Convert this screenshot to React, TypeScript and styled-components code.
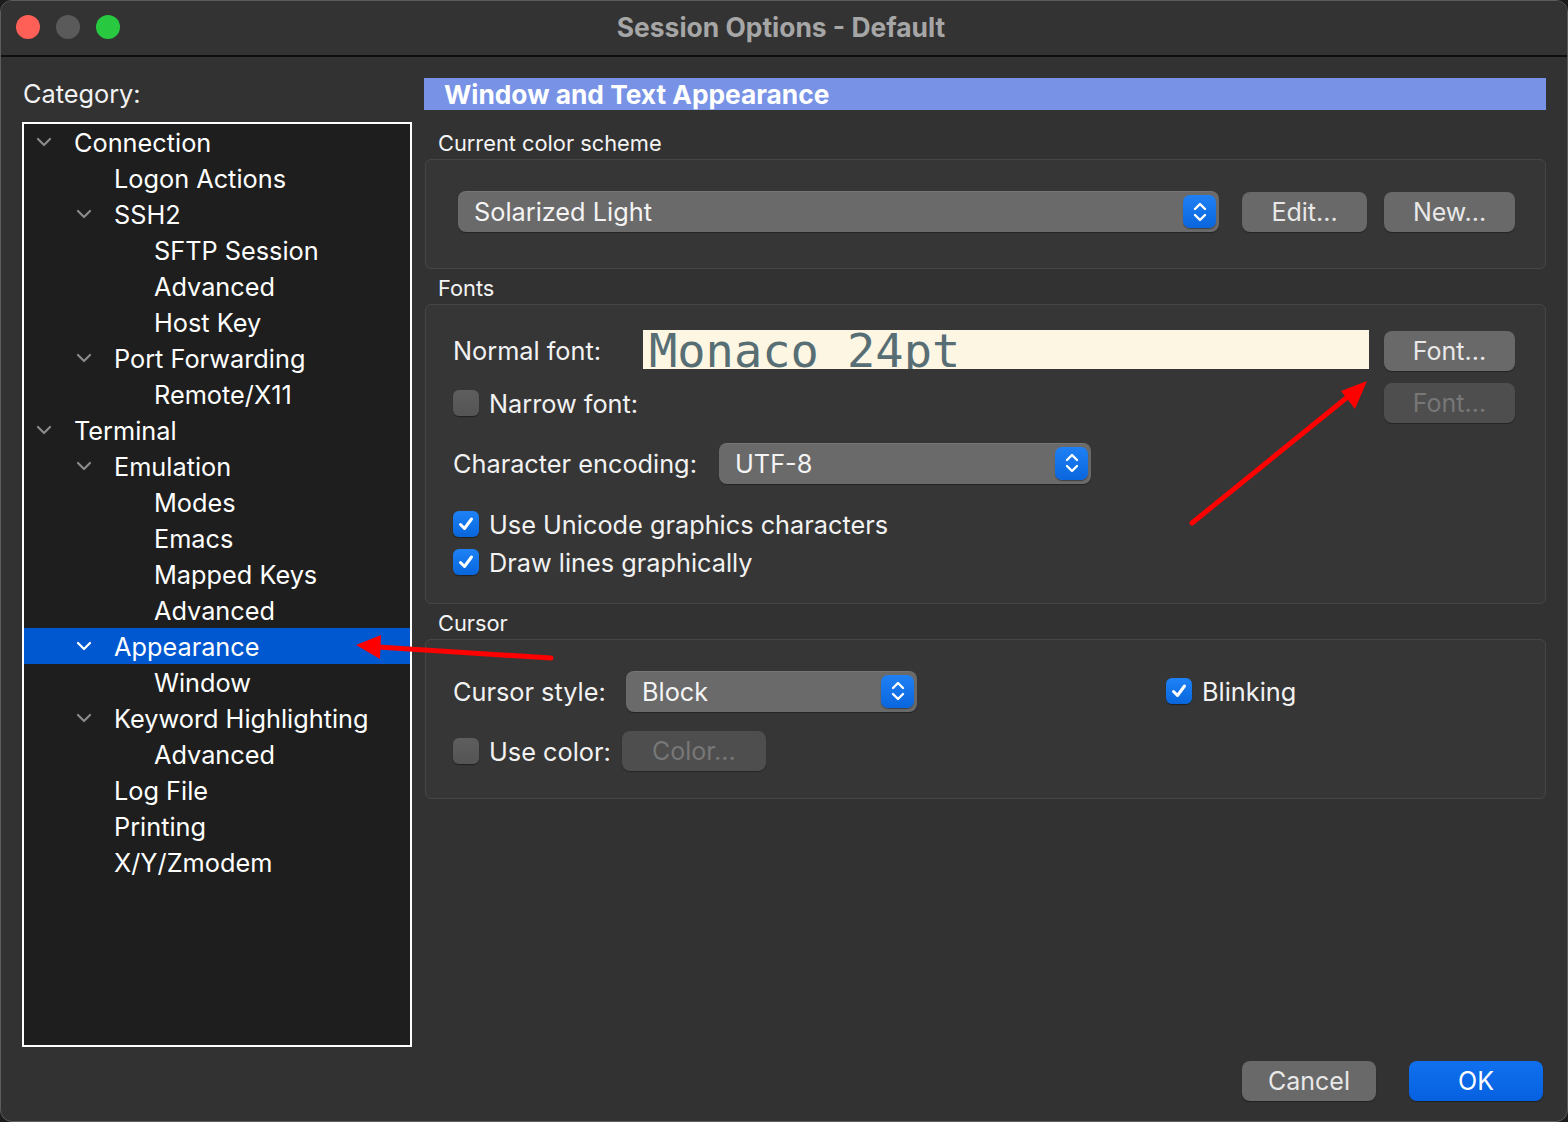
import React from "react";
import styled, { createGlobalStyle } from "styled-components";

const Global = createGlobalStyle`
  html, body { margin: 0; padding: 0; background: #1c1c1c; }
  body { font-family: Inter, "Noto Sans", "Liberation Sans", sans-serif; -webkit-font-smoothing: antialiased; }
  * { box-sizing: border-box; }
`;

const Window = styled.div`
  position: relative;
  width: 1568px;
  height: 1122px;
  background: #323232;
  border: 1px solid #5c5c5c;
  border-radius: 12px;
  overflow: hidden;
  display: flex;
  flex-direction: column;
  color: #f2f2f2;
`;

const TitleBar = styled.div`
  height: 56px;
  flex: none;
  display: flex;
  align-items: center;
  position: relative;
  border-bottom: 2px solid #0e0e0e;
  background: #333333;
  padding-bottom: 2px;
`;

const Lights = styled.div`
  display: flex;
  gap: 16px;
  padding-left: 15px;
`;

const Light = styled.span<{ $c: string }>`
  width: 24px;
  height: 24px;
  border-radius: 50%;
  background: ${(p) => p.$c};
`;

const Title = styled.div`
  position: absolute;
  left: 0;
  right: 0;
  top: 9px;
  text-align: center;
  font-size: 26.4px;
  line-height: 34px;
  font-weight: 700;
  color: #a6a6a6;
  padding-right: 6px;
`;

const Main = styled.div`
  flex: 1;
  display: flex;
  gap: 12px;
  padding: 21px 21px 0 21px;
  min-height: 0;
`;

const LeftCol = styled.div`
  width: 390px;
  flex: none;
  display: flex;
  flex-direction: column;
`;

const CategoryLabel = styled.div`
  font-size: 25.3px;
  line-height: 32px;
  height: 30px;
  margin-bottom: 14px;
  padding-left: 1px;
`;

const TreeBox = styled.div`
  height: 926px;
  border: 2px solid #ffffff;
  background: #1e1e1e;
  display: flex;
  flex-direction: column;
`;

const TreeRow = styled.div<{ $level: number; $selected?: boolean }>`
  height: 36px;
  flex: none;
  display: flex;
  align-items: center;
  padding-left: ${(p) => 12 + p.$level * 40}px;
  background: ${(p) => (p.$selected ? "#0058d1" : "transparent")};
  font-size: 25.3px;
  color: #ffffff;
`;

const ChevronSlot = styled.span`
  width: 38px;
  flex: none;
  display: flex;
  align-items: center;
`;

const RightCol = styled.div`
  flex: 1;
  display: flex;
  flex-direction: column;
  min-width: 0;
`;

const Header = styled.div`
  height: 32px;
  background: #7892e6;
  color: #ffffff;
  font-weight: 700;
  font-size: 26.3px;
  line-height: 33px;
  padding-left: 20px;
`;

const GroupLabel = styled.div<{ $mt: number }>`
  margin-top: ${(p) => p.$mt}px;
  height: 26px;
  line-height: 27px;
  font-size: 21.8px;
  padding-left: 14px;
  margin-bottom: 3px;
  color: #f4f4f4;
`;

const Group = styled.div<{ $h: number; $pt: number }>`
  height: ${(p) => p.$h}px;
  border: 1px solid #464646;
  border-radius: 6px;
  background: #363636;
  margin-left: 1px;
  padding: ${(p) => p.$pt}px 30px 0 27px;
  display: flex;
  flex-direction: column;
`;

const Row = styled.div<{ $h?: number; $mt?: number }>`
  display: flex;
  align-items: center;
  height: ${(p) => p.$h ?? 40}px;
  margin-top: ${(p) => p.$mt ?? 0}px;
  flex: none;
`;

const Label = styled.span<{ $w?: number }>`
  font-size: 25.3px;
  color: #f2f2f2;
  white-space: nowrap;
  ${(p) => (p.$w ? `width: ${p.$w}px; flex: none;` : "")}
`;

const Select = styled.div<{ $w: number; $ml?: number }>`
  width: ${(p) => p.$w}px;
  margin-left: ${(p) => p.$ml ?? 0}px;
  height: 41px;
  flex: none;
  border-radius: 8px;
  background: #6a6a6a;
  box-shadow: 0 1px 1px rgba(0, 0, 0, 0.35), inset 0 1px 0 rgba(255, 255, 255, 0.08);
  display: flex;
  align-items: center;
  justify-content: space-between;
  padding: 0 3px 0 16px;
  font-size: 25.3px;
  color: #f4f4f4;
`;

const Stepper = styled.span`
  width: 33px;
  height: 33px;
  border-radius: 7px;
  background: linear-gradient(#1f80f4, #0a66dd);
  display: flex;
  align-items: center;
  justify-content: center;
  box-shadow: 0 1px 1px rgba(0, 0, 0, 0.4);
`;

const Button = styled.div<{ $w: number; $disabled?: boolean; $primary?: boolean; $ml?: number }>`
  width: ${(p) => p.$w}px;
  height: 40px;
  margin-left: ${(p) => p.$ml ?? 0}px;
  flex: none;
  border-radius: 8px;
  display: flex;
  align-items: center;
  justify-content: center;
  font-size: 25px;
  background: ${(p) => (p.$primary ? "linear-gradient(#1070ee, #0661e0)" : p.$disabled ? "#4e4e4e" : "#696969")};
  color: ${(p) => (p.$primary ? "#ffffff" : p.$disabled ? "#777777" : "#e8e8e8")};
  box-shadow: 0 1px 1px rgba(0, 0, 0, 0.35);
`;

const Checkbox = styled.span<{ $checked?: boolean; $ml?: number }>`
  width: 26px;
  height: 26px;
  flex: none;
  border-radius: 6px;
  margin-right: 10px;
  margin-left: ${(p) => p.$ml ?? 0}px;
  display: flex;
  align-items: center;
  justify-content: center;
  background: ${(p) => (p.$checked ? "linear-gradient(#1e82f6, #0866dc)" : "linear-gradient(#5e5e5e, #545454)")};
  box-shadow: 0 1px 1px rgba(0, 0, 0, 0.4);
`;

const Preview = styled.div`
  flex: 1;
  align-self: flex-start;
  height: 39px;
  background: #fdf6e3;
  color: #586e75;
  font-family: "DejaVu Sans Mono", "Liberation Mono", monospace;
  font-size: 47px;
  line-height: 39px;
  padding: 1px 0 0 6px;
  white-space: pre;
  overflow: hidden;
`;

const Spacer = styled.span`
  flex: 1;
`;

const Footer = styled.div`
  height: 74px;
  flex: none;
  display: flex;
  justify-content: flex-end;
  align-items: flex-start;
  padding: 14px 24px 0 0;
  gap: 33px;
`;

const Overlay = styled.svg`
  position: absolute;
  left: -1px;
  top: -1px;
  pointer-events: none;
`;

const Chevron = ({ color }: { color: string }) => (
  <svg width="16" height="10" viewBox="0 0 16 10">
    <polyline points="2,2 8,8 14,2" fill="none" stroke={color} strokeWidth="2.2" strokeLinecap="round" strokeLinejoin="round" />
  </svg>
);

const StepIcon = () => (
  <svg width="16" height="26" viewBox="0 0 16 26">
    <polyline points="3,10 8,5 13,10" fill="none" stroke="#fff" strokeWidth="2.4" strokeLinecap="round" strokeLinejoin="round" />
    <polyline points="3,16 8,21 13,16" fill="none" stroke="#fff" strokeWidth="2.4" strokeLinecap="round" strokeLinejoin="round" />
  </svg>
);

const Check = () => (
  <svg width="18" height="18" viewBox="0 0 18 18">
    <polyline points="3.5,9.5 7.5,13.5 14.5,4" fill="none" stroke="#fff" strokeWidth="3" strokeLinecap="round" strokeLinejoin="round" />
  </svg>
);

type Item = { label: string; level: number; expand?: boolean; selected?: boolean };

const items: Item[] = [
  { label: "Connection", level: 0, expand: true },
  { label: "Logon Actions", level: 1 },
  { label: "SSH2", level: 1, expand: true },
  { label: "SFTP Session", level: 2 },
  { label: "Advanced", level: 2 },
  { label: "Host Key", level: 2 },
  { label: "Port Forwarding", level: 1, expand: true },
  { label: "Remote/X11", level: 2 },
  { label: "Terminal", level: 0, expand: true },
  { label: "Emulation", level: 1, expand: true },
  { label: "Modes", level: 2 },
  { label: "Emacs", level: 2 },
  { label: "Mapped Keys", level: 2 },
  { label: "Advanced", level: 2 },
  { label: "Appearance", level: 1, expand: true, selected: true },
  { label: "Window", level: 2 },
  { label: "Keyword Highlighting", level: 1, expand: true },
  { label: "Advanced", level: 2 },
  { label: "Log File", level: 1 },
  { label: "Printing", level: 1 },
  { label: "X/Y/Zmodem", level: 1 },
];

export default function App() {
  return (
    <>
      <Global />
      <Window>
        <TitleBar>
          <Lights>
            <Light $c="#fe5f57" />
            <Light $c="#5a5a5a" />
            <Light $c="#28c840" />
          </Lights>
          <Title>Session Options - Default</Title>
        </TitleBar>
        <Main>
          <LeftCol>
            <CategoryLabel>Category:</CategoryLabel>
            <TreeBox>
              {items.map((it, i) => (
                <TreeRow key={i} $level={it.level} $selected={it.selected}>
                  <ChevronSlot>{it.expand && <Chevron color={it.selected ? "#ffffff" : "#8a8a8a"} />}</ChevronSlot>
                  {it.label}
                </TreeRow>
              ))}
            </TreeBox>
          </LeftCol>
          <RightCol>
            <Header>Window and Text Appearance</Header>
            <GroupLabel $mt={20}>Current color scheme</GroupLabel>
            <Group $h={110} $pt={31}>
              <Row $h={41}>
                <Select $w={761} $ml={5}>
                  Solarized Light
                  <Stepper>
                    <StepIcon />
                  </Stepper>
                </Select>
                <Button $w={125} $ml={23}>Edit...</Button>
                <Button $w={131} $ml={17}>New...</Button>
              </Row>
            </Group>
            <GroupLabel $mt={6}>Fonts</GroupLabel>
            <Group $h={300} $pt={25}>
              <Row $h={41}>
                <Label $w={190}>Normal font:</Label>
                <Preview>{"Monaco 24pt"}</Preview>
                <Button $w={131} $ml={15}>Font...</Button>
              </Row>
              <Row $mt={12}>
                <Checkbox />
                <Label>Narrow font:</Label>
                <Spacer />
                <Button $w={131} $disabled>Font...</Button>
              </Row>
              <Row $mt={20}>
                <Label $w={266}>Character encoding:</Label>
                <Select $w={372}>
                  UTF-8
                  <Stepper>
                    <StepIcon />
                  </Stepper>
                </Select>
              </Row>
              <Row $h={30} $mt={26}>
                <Checkbox $checked>
                  <Check />
                </Checkbox>
                <Label>Use Unicode graphics characters</Label>
              </Row>
              <Row $h={30} $mt={8}>
                <Checkbox $checked>
                  <Check />
                </Checkbox>
                <Label>Draw lines graphically</Label>
              </Row>
            </Group>
            <GroupLabel $mt={6}>Cursor</GroupLabel>
            <Group $h={160} $pt={31}>
              <Row>
                <Label $w={173}>Cursor style:</Label>
                <Select $w={291}>
                  Block
                  <Stepper>
                    <StepIcon />
                  </Stepper>
                </Select>
                <Checkbox $checked $ml={249}>
                  <Check />
                </Checkbox>
                <Label>Blinking</Label>
              </Row>
              <Row $mt={20}>
                <Checkbox />
                <Label>Use color:</Label>
                <Button $w={144} $disabled $ml={11}>Color...</Button>
              </Row>
            </Group>
          </RightCol>
        </Main>
        <Footer>
          <Button $w={134}>Cancel</Button>
          <Button $w={134} $primary>OK</Button>
        </Footer>
        <Overlay width="1568" height="1122" viewBox="0 0 1568 1122">
          <line x1="1192" y1="523" x2="1350" y2="395" stroke="#ff0000" strokeWidth="5" strokeLinecap="round" />
          <polygon points="1367,381 1355,409 1341,391" fill="#ff0000" />
          <line x1="551" y1="658" x2="378" y2="647" stroke="#ff0000" strokeWidth="5" strokeLinecap="round" />
          <polygon points="356,645 381,635 380,659" fill="#ff0000" />
        </Overlay>
      </Window>
    </>
  );
}
